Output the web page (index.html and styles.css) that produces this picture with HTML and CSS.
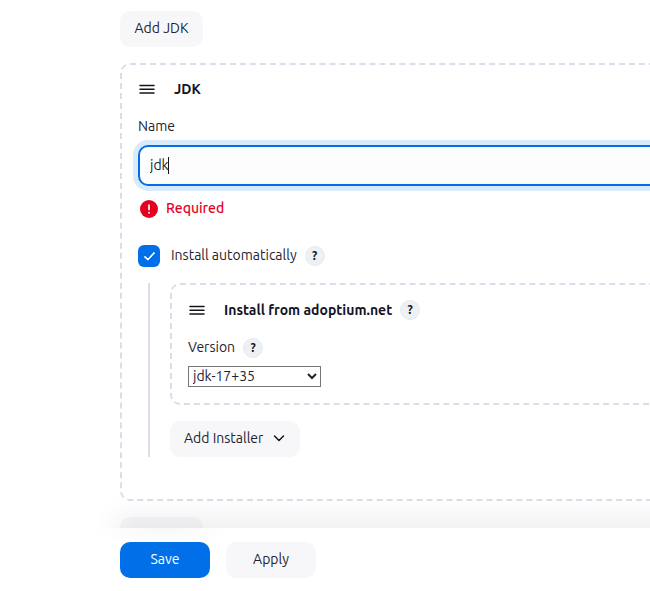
FILE: index.html
```html
<!DOCTYPE html>
<html lang="en">
<head>
<meta charset="utf-8">
<meta name="viewport" content="width=device-width, initial-scale=1">
<title>JDK installations</title>
<link rel="stylesheet" href="styles.css">
</head>
<body>
<form class="page">
  <main class="content">
    <button class="button button-add" type="button">Add JDK</button>

    <section class="card card-outer">
      <header class="card-header">
        <svg class="handle" viewBox="0 0 18 18" aria-hidden="true"><path d="M2 5.500h14M2 9.300h14M2 13h14"/></svg>
        <h2 class="title">JDK</h2>
      </header>

      <label class="label" for="name">Name</label>
      <div class="field">
        <input class="input" id="name" type="text" value="jdk" autocomplete="off">
        <span class="caret"></span>
      </div>
      <p class="error">
        <svg class="error-icon" viewBox="0 0 18 18" aria-hidden="true"><circle cx="9" cy="9" r="9"/><path d="M9 5v4.500"/><path d="M9 12.700v.1"/></svg>
        <span class="text">Required</span>
      </p>

      <div class="row check-row">
        <input class="checkbox" id="auto" type="checkbox" checked>
        <label class="text" for="auto">Install automatically</label>
        <button class="help" type="button">?</button>
      </div>

      <div class="nested">
        <section class="card card-inner">
          <header class="card-header">
            <svg class="handle" viewBox="0 0 18 18" aria-hidden="true"><path d="M2 5.500h14M2 9.300h14M2 13h14"/></svg>
            <h3 class="title">Install from adoptium.net</h3>
            <button class="help" type="button">?</button>
          </header>
          <div class="row version-row">
            <label class="text" for="version">Version</label>
            <button class="help" type="button">?</button>
          </div>
          <select class="select" id="version"><option>jdk-17+35</option></select>
        </section>
        <button class="button" type="button">Add Installer
          <svg class="chevron" viewBox="0 0 14 14" aria-hidden="true"><path d="M2.500 5L7 9.500 11.500 5"/></svg>
        </button>
      </div>
    </section>

    <button class="button button-add" type="button" aria-label="Add JDK"></button>
  </main>

  <footer class="footer">
    <button class="button button-wide button-primary" type="submit">Save</button>
    <button class="button button-wide" type="button">Apply</button>
  </footer>
</form>
</body>
</html>
```

FILE: styles.css
```css
* {
  box-sizing: border-box;
}

body {
  margin: 0;
  overflow: hidden;
  background: #fff;
  color: #23232f;
  font: 14px/20px Ubuntu, "Open Sans", "Noto Sans", sans-serif;
}

button,
input,
select {
  color: inherit;
  font: inherit;
}

.page {
  display: flex;
  flex-direction: column;
  height: 100vh;
}

/* Cards run on past the right edge of the window. */
.content {
  flex: 1;
  min-height: 0;
  margin-right: -32px;
  padding: 11px 0 0 120px;
  overflow: hidden;
}

.button {
  display: inline-flex;
  align-items: center;
  justify-content: center;
  gap: 9px;
  height: 36px;
  padding: 0 14px 2px;
  border: 0;
  border-radius: 10px;
  background: #f7f7fa;
  vertical-align: top;
}

.button-add {
  min-width: 83px;
}

.button-wide {
  width: 90px;
}

.button-primary {
  background: #006fe8;
  color: #fff;
}

.chevron {
  width: 14px;
  height: 14px;
  fill: none;
  stroke: #14141f;
  stroke-width: 1.5;
  stroke-linecap: round;
  stroke-linejoin: round;
}

.card {
  padding: 15px 16px 16px;
  border: 2px dashed #d8dfea;
  border-radius: 10px;
}

.card-outer {
  margin: 16px 0;
  padding: 14px 16px 42px;
}

.card-header,
.row {
  display: flex;
  align-items: center;
  gap: 8px;
}

.card-header {
  height: 20px;
}

.handle {
  width: 18px;
  height: 18px;
  margin-right: 10px;
  stroke: #14141f;
  stroke-width: 1.5;
  stroke-linecap: round;
}

.title {
  margin: 0;
  color: #14141f;
  font-size: 14px;
  font-weight: 600;
}

.text {
  padding-bottom: 2px;
}

.label {
  display: block;
  margin: 17px 0 9px;
}

.field {
  position: relative;
}

.input {
  display: block;
  width: 100%;
  height: 41px;
  padding: 0 10px 2px;
  border: 2px solid #006fe8;
  border-radius: 10px;
  outline: 0;
  background: #fdfdfd;
  box-shadow: 0 0 0 5px #d9eafb;
}

.caret {
  position: absolute;
  top: 12px;
  left: 30px;
  width: 1px;
  height: 17px;
  background: #14141f;
}

.error {
  display: flex;
  align-items: center;
  gap: 8px;
  height: 20px;
  margin: 13px 0 27px;
  padding-left: 2px;
  color: #e6001f;
  font-weight: 500;
}

.error-icon {
  width: 18px;
  height: 18px;
  fill: #e6001f;
}

.error-icon path {
  stroke: #fff;
  stroke-width: 1.7;
  stroke-linecap: round;
}

.check-row {
  height: 20px;
}

.checkbox {
  width: 22px;
  height: 22px;
  margin: 0 3px 0 0;
  border-radius: 6px;
  appearance: none;
  background: #006fe8;
  display: grid;
  place-items: center;
}

.checkbox:checked::before {
  content: "";
  box-sizing: border-box;
  width: 11px;
  height: 6px;
  margin-bottom: 3px;
  border: solid #fff;
  border-width: 0 0 2px 2px;
  border-radius: 1px;
  transform: rotate(-48deg);
}

.help {
  width: 20px;
  height: 20px;
  padding: 0;
  border: 1px solid #e6ebf1;
  border-radius: 50%;
  background: #edf1f4;
  color: #14141f;
  font-size: 12px;
  line-height: 18px;
  font-weight: 600;
}

.nested {
  margin: 17px 0 0 10px;
  padding-left: 20px;
  border-left: 2px solid #d8dfea;
}

.card-inner {
  margin-bottom: 16px;
}

.version-row {
  height: 20px;
  margin: 18px 0 8px;
}

.select {
  display: block;
  width: 133px;
  height: 21px;
  padding-bottom: 2px;
  border: 1px solid #767676;
  border-radius: 0;
  background: #fff;
}

.footer {
  position: relative;
  display: flex;
  gap: 16px;
  padding: 14px 0 13px 120px;
  background: radial-gradient(70px 20px at 162px 0, #f8f8f9, #fff);
}

/* Soft shade that the bar casts on the content above it. */
.footer::before {
  content: "";
  position: absolute;
  right: 0;
  bottom: 100%;
  left: 96px;
  height: 30px;
  background: linear-gradient(rgba(0, 0, 0, 0), rgba(0, 0, 0, 0.05));
  mask-image: linear-gradient(90deg, transparent, #000 40px);
}
```
